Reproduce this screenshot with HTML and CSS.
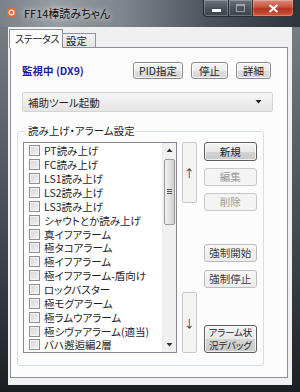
FILE: index.html
```html
<!DOCTYPE html>
<html lang="ja">
<head>
<meta charset="utf-8">
<title>FF14棒読みちゃん</title>
<link rel="stylesheet" href="styles.css">
</head>
<body>
<div class="win">
  <div class="titlebar">
    <svg class="appicon" width="9" height="9" viewBox="0 0 9 9"><rect x="0" y="0" width="9" height="9" rx="2" fill="#e8692e"/><circle cx="4.5" cy="4.5" r="2.4" fill="none" stroke="#fff" stroke-width="1.2"/></svg>
    <span class="title">FF14棒読みちゃん</span>
    <div class="caption">
      <span class="cb min"><span class="min-bar"></span></span>
      <span class="cb max"><span class="max-box"></span></span>
      <span class="cb close"><svg width="11" height="9" viewBox="0 0 11 9"><path d="M1.5 1 L9.5 8 M9.5 1 L1.5 8" stroke="#fff" stroke-width="2.2"/></svg></span>
    </div>
  </div>
  <div class="client">
    <div class="tabs">
      <div class="tab active">ステータス</div>
      <div class="tab">設定</div>
    </div>
    <div class="panel">
      <div class="status-row">
        <span class="status">監視中 (DX9)</span>
        <span class="btn w-pid">PID指定</span>
        <span class="btn w-stop">停止</span>
        <span class="btn w-detail">詳細</span>
      </div>
      <div class="combo"><span class="combo-text">補助ツール起動</span><svg class="combo-arrow" width="7" height="4" viewBox="0 0 7 4"><path d="M0.5 0 L6.5 0 L3.5 3.5 Z" fill="#222"/></svg></div>
      <fieldset class="group">
        <legend class="legend">読み上げ・アラーム設定</legend>
        <div class="group-body">
          <div class="list">
            <ul class="items">
              <li><span class="chk"></span>PT読み上げ</li>
              <li><span class="chk"></span>FC読み上げ</li>
              <li><span class="chk"></span>LS1読み上げ</li>
              <li><span class="chk"></span>LS2読み上げ</li>
              <li><span class="chk"></span>LS3読み上げ</li>
              <li><span class="chk"></span>シャウトとか読み上げ</li>
              <li><span class="chk"></span>真イフアラーム</li>
              <li><span class="chk"></span>極タコアラーム</li>
              <li><span class="chk"></span>極イフアラーム</li>
              <li><span class="chk"></span>極イフアラーム-盾向け</li>
              <li><span class="chk"></span>ロックバスター</li>
              <li><span class="chk"></span>極モグアラーム</li>
              <li><span class="chk"></span>極ラムウアラーム</li>
              <li><span class="chk"></span>極シヴァアラーム(適当)</li>
              <li><span class="chk"></span>バハ邂逅編2層</li>
            </ul>
            <div class="vscroll">
              <div class="sb-arrow"><svg width="7" height="4" viewBox="0 0 7 4"><path d="M0.5 4 L6.5 4 L3.5 0.5 Z" fill="#333"/></svg></div>
              <div class="sb-track">
                <div class="sb-thumb"><span class="grip"></span></div>
              </div>
              <div class="sb-arrow"><svg width="7" height="4" viewBox="0 0 7 4"><path d="M0.5 0 L6.5 0 L3.5 3.5 Z" fill="#333"/></svg></div>
            </div>
          </div>
          <div class="movecol">
            <span class="move up">↑</span>
            <span class="move down">↓</span>
          </div>
          <div class="actions">
            <span class="btn default a-new">新規</span>
            <span class="btn disabled a-edit">編集</span>
            <span class="btn disabled a-del">削除</span>
            <span class="btn light a-start">強制開始</span>
            <span class="btn light a-stop">強制停止</span>
            <span class="btn default a-debug"><span class="dbg-line">アラーム状</span><span class="dbg-line">況デバッグ</span></span>
          </div>
        </div>
      </fieldset>
    </div>
  </div>
</div>
</body>
</html>
```

FILE: styles.css
```css
* { box-sizing: border-box; }
html, body { margin: 0; padding: 0; }
body {
  width: 300px;
  height: 392px;
  overflow: hidden;
  font-family: "Noto Sans CJK JP", "Noto Sans", sans-serif;
  font-feature-settings: "palt";
  font-size: 10.5px;
  color: #1e1e1e;
}
.win {
  width: 300px;
  height: 392px;
  display: flex;
  flex-direction: column;
  background: linear-gradient(to bottom, #7c838a 0%, #5a6168 35%, #333a41 75%, #1b1f24 100%);
  padding: 0 8px 7px 8px;
}
.titlebar {
  height: 27px;
  margin: 0 -8px;
  display: flex;
  align-items: flex-start;
  background: linear-gradient(to right, #7a8188 0%, #979ca1 18%, #80868c 40%, #4b525a 70%, #2d343b 100%);
}
.appicon { margin: 8px 0 0 7px; flex: none; }
.title {
  margin: 5px 0 0 8px;
  font-size: 11px;
  line-height: 16px;
  color: #0d0d0d;
  text-shadow: 0 0 5px rgba(230,232,235,0.95), 0 0 9px rgba(220,224,228,0.8);
}
.caption {
  margin-left: auto;
  margin-right: 6px;
  display: flex;
}
.cb {
  height: 17px;
  display: flex;
  align-items: center;
  justify-content: center;
  border: 1px solid rgba(20,24,30,0.75);
  border-top: none;
  box-shadow: inset 0 0 0 1px rgba(255,255,255,0.25);
}
.min {
  width: 25px;
  border-bottom-left-radius: 4px;
  border-right: none;
  background: linear-gradient(to bottom, #6c737b, #4a5159 55%, #3c434b);
}
.max {
  width: 24px;
  border-right: none;
  background: linear-gradient(to bottom, #6c737b, #4a5159 55%, #3c434b);
}
.close {
  width: 42px;
  border-bottom-right-radius: 4px;
  background: linear-gradient(to bottom, #d88b7c 0%, #c9523c 45%, #b3321c 55%, #cf5a3d 100%);
}
.min-bar {
  width: 9px;
  height: 3px;
  margin-top: 5px;
  background: #fff;
  box-shadow: 0 0 1px #222;
}
.max-box {
  width: 9px;
  height: 8px;
  border: 1px solid rgba(190,196,202,0.7);
  border-top-width: 2px;
}
.client {
  flex: 1;
  background: #f0f0f0;
  padding: 2px 4px 7px 1px;
  display: flex;
  flex-direction: column;
}
.tabs {
  display: flex;
  align-items: flex-end;
  height: 18px;
  position: relative;
  z-index: 1;
}
.tab {
  height: 14px;
  line-height: 13px;
  border: 1px solid #8e919a;
  border-bottom: none;
  background: linear-gradient(to bottom, #f2f2f2, #e3e3e3);
  font-size: 10.5px;
  white-space: nowrap;
}
.tab.active {
  width: 54px;
  height: 19px;
  margin-bottom: -1px;
  line-height: 17px;
  padding: 0 0 0 5px;
  font-size: 10px;
  letter-spacing: -0.3px;
  background: #fcfcfc;
}
.tab:not(.active) {
  width: 33px;
  border-left: none;
  padding-left: 3px;
}
.panel {
  flex: 1;
  margin-left: 1px;
  border: 1px solid #8e919a;
  background: #fcfcfc;
  padding: 14px 14px 0 11px;
  display: flex;
  flex-direction: column;
}
.status-row {
  display: flex;
  align-items: center;
  height: 17px;
}
.status {
  color: #1c1ca0;
  font-weight: bold;
  font-size: 10.5px;
  margin-right: auto;
}
.btn {
  display: flex;
  align-items: center;
  justify-content: center;
  height: 17px;
  border: 1px solid #8a8a8a;
  border-radius: 3px;
  background: linear-gradient(to bottom, #f5f5f5 0%, #ececec 50%, #dedede 51%, #d6d6d6 100%);
  box-shadow: inset 0 0 0 1px rgba(255,255,255,0.7);
  font-size: 10.5px;
  line-height: 12px;
  color: #1e1e1e;
  text-align: center;
  white-space: nowrap;
}
.w-pid { width: 50px; }
.w-stop { width: 37px; margin-left: 8px; }
.w-detail { width: 35px; margin-left: 8px; margin-right: 2px; }
.combo {
  margin-top: 13px;
  width: 251px;
  height: 20px;
  border: 1px solid #d4d4d4;
  border-radius: 2px;
  background: linear-gradient(to bottom, #f7f7f7, #ededed 50%, #e4e4e4);
  display: flex;
  align-items: center;
  padding: 0 10px 0 5px;
}
.combo-text { margin-right: auto; }
.group {
  margin: 13px 9px 0 -5px;
  padding: 5px 6px 12px 5px;
  border: 1px solid #d5dfe5;
  border-radius: 3px;
  min-width: 0;
}
.legend {
  padding: 0 2px;
  margin-left: 3px;
  line-height: 12px;
  font-size: 10.5px;
}
.group-body {
  display: flex;
  align-items: stretch;
  height: 211px;
}
.list {
  width: 164px;
  border: 1px solid #848892;
  background: #fff;
  display: flex;
  overflow: hidden;
}
.items {
  list-style: none;
  margin: 0;
  padding: 1px 0 0 5px;
  flex: 1;
}
.items li {
  height: 13.86px;
  display: flex;
  align-items: center;
  white-space: nowrap;
  font-size: 10.5px;
  line-height: 13px;
}
.chk {
  width: 11px;
  height: 11px;
  margin-right: 4px;
  flex: none;
  border: 1px solid #8e8f8f;
  background: linear-gradient(135deg, #d4d4d4, #f4f4f4);
  box-shadow: inset 0 0 0 1px #f4f4f4;
}
.vscroll {
  width: 14px;
  flex: none;
  background: #f0f0f0;
  border-left: 1px solid #ececec;
  display: flex;
  flex-direction: column;
}
.sb-arrow {
  height: 14px;
  display: flex;
  align-items: center;
  justify-content: center;
}
.sb-track {
  flex: 1;
  padding-top: 2px;
}
.sb-thumb {
  height: 66px;
  margin: 0 1px;
  border: 1px solid #9a9a9a;
  border-radius: 2px;
  background: linear-gradient(to right, #f1f1f1, #e2e2e2 50%, #d0d0d0);
  display: flex;
  align-items: center;
  justify-content: center;
}
.grip {
  width: 5px;
  height: 6px;
  background: repeating-linear-gradient(to bottom, #555 0 1px, transparent 1px 2px);
}
.movecol {
  margin-left: 5px;
  width: 15px;
  display: flex;
  flex-direction: column;
  justify-content: space-between;
}
.move {
  width: 15px;
  border: 1px solid #c9c9c9;
  border-radius: 2px;
  background: #f3f3f3;
  display: flex;
  align-items: center;
  justify-content: center;
  font-size: 11px;
  color: #333;
}
.up { height: 61px; }
.down { height: 61px; }
.actions {
  margin-left: 7px;
  width: 57px;
  display: flex;
  flex-direction: column;
}
.actions .btn { height: 18px; }
.btn.default {
  border-color: #5e5e5e;
  background: linear-gradient(to bottom, #f4f4f4 0%, #e8e8e8 50%, #d4d4d4 51%, #c9c9c9 100%);
}
.btn.disabled {
  border-color: #c8c8c8;
  background: #f4f4f4;
  color: #9a9a9a;
  box-shadow: none;
}
.btn.light {
  border-color: #bdbdbd;
  background: linear-gradient(to bottom, #f7f7f7, #ececec);
  color: #3a3a3a;
  box-shadow: none;
}
.actions .a-new { height: 19px; }
.a-edit { margin-top: 7px; }
.a-del { margin-top: 7px; }
.a-start { margin-top: 33px; }
.a-stop { margin-top: 8px; }
.actions .a-debug {
  margin-top: auto;
  height: 28px;
  flex-direction: column;
  font-size: 9.5px;
  letter-spacing: -0.2px;
}
.dbg-line { display: block; line-height: 13px; }
```
